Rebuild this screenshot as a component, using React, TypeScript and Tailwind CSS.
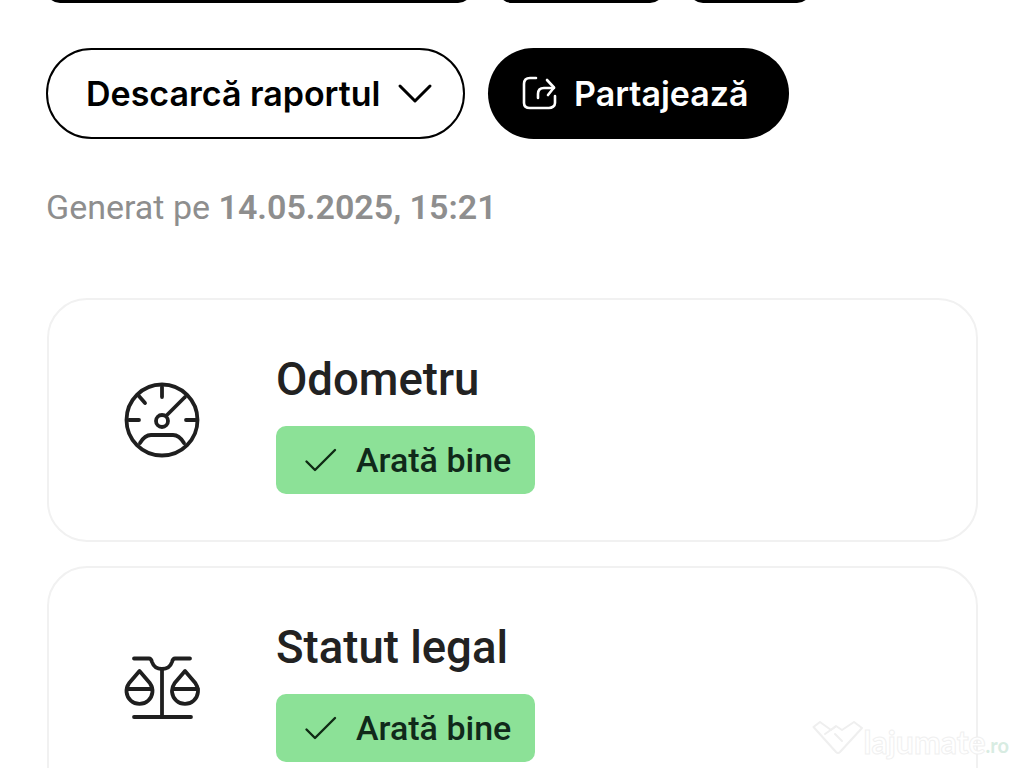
import React from "react";

const Check = () => (
  <svg width="34" height="26" viewBox="0 0 34 26" fill="none" stroke="#0f2a14" strokeWidth="2.4" strokeLinecap="round" strokeLinejoin="round" className="shrink-0">
    <path d="M2.5 14.5 L11 23 L31 3" />
  </svg>
);

const Gauge = () => (
  <svg width="76" height="76" viewBox="0 0 76 76" fill="none" stroke="#1f1f1f" strokeWidth="3.8" strokeLinecap="round" strokeLinejoin="round" className="block">
    <circle cx="38" cy="38" r="35.5" />
    <path d="M38 5 V15" />
    <path d="M14 13 L21 21" />
    <path d="M5 38 H15" />
    <path d="M62 38 H72" />
    <circle cx="38" cy="39" r="6" />
    <path d="M43 33 L61 15" />
    <path d="M16 61 C19 56 22 53 27 53 H49 C54 53 57 56 60 61" />
  </svg>
);

const Scales = () => (
  <svg width="76" height="64" viewBox="0 0 76 64" fill="none" stroke="#1f1f1f" strokeWidth="3.8" strokeLinecap="round" strokeLinejoin="round" className="block">
    <path d="M10 2.5 H25 C27 2.5 27.500 4 28 6 C29.500 10.500 33 13 38 13 C43 13 46.500 10.500 48 6 C48.500 4 49 2.500 51 2.500 H66" />
    <path d="M38 13 V61" />
    <path d="M10 61 H67" />
    <path d="M15.500 15 L5 27.300 A13 13 0 1 0 26 27.300 Z" />
    <path d="M3 33 H28" />
    <path d="M61 15 L50.500 27.300 A13 13 0 1 0 71.500 27.300 Z" />
    <path d="M49 33 H74" />
  </svg>
);

const Share = () => (
  <svg width="36" height="36" viewBox="0 0 36 36" fill="none" stroke="#ffffff" strokeWidth="2.6" strokeLinecap="round" strokeLinejoin="round" className="shrink-0">
    <path d="M14 2 H8 C4 2 2 4 2 8 V27 C2 30 4 32 8 32 H27 C30 32 33 30 33 27 V20" />
    <path d="M16 22 V18 C16 14 18 12 22 12 H32" />
    <path d="M25 4 L32 11.500 L26 19" />
  </svg>
);

const Card = ({ icon, title }: { icon: React.ReactNode; title: string }) => (
  <div className="flex h-[244px] shrink-0 items-center rounded-[40px] border-2 border-[#f1f1f1] bg-white pl-[75px]">
    <div className="flex w-[152px] shrink-0 items-center">{icon}</div>
    <div className="flex flex-col items-start pt-[8px]">
      <h2 className="text-[45.5px] leading-[52px] font-medium text-[#222222]">{title}</h2>
      <div className="mt-[20px] flex h-[68px] w-[259px] items-center gap-[18px] rounded-[10px] bg-[#8ce197] pl-[28px]">
        <Check />
        <span className="text-[34px] leading-[40px] font-medium text-[#10291a]">Arată bine</span>
      </div>
    </div>
  </div>
);

const Logo = () => (
  <div className="pointer-events-none absolute bottom-[8px] right-[15px] flex items-end">
    <svg width="52" height="34" viewBox="0 0 52 34" fill="none" stroke="#efefef" strokeWidth="2" strokeLinejoin="round" strokeLinecap="round" className="mb-[5px]">
      <path d="M1.500 6 L8 1 L19 9 L24 5 L30 9 L42 1 L50 7 L28 31 Q26 33 24 31 Z" />
      <path d="M13 13 L23 6" />
      <path d="M23 13 L30 20" />
    </svg>
    <span className="font-['Lato',sans-serif] text-[32px] leading-[36px] font-bold text-white [-webkit-text-stroke:1px_#f0f0f0]">lajumate</span>
    <span className="font-['Lato',sans-serif] text-[20px] leading-[29px] font-bold text-[#d8ece2]">.ro</span>
  </div>
);

export default function App() {
  return (
    <div className="relative flex h-[768px] w-[1024px] flex-col overflow-hidden bg-white px-[46px] font-['Roboto',sans-serif]">
      <div className="-mt-[87px] flex shrink-0">
        <div className="h-[90px] w-[426px] rounded-[14px] bg-black" />
        <div className="ml-[26px] h-[90px] w-[166px] rounded-[14px] bg-black" />
        <div className="ml-[25px] h-[90px] w-[122px] rounded-[14px] bg-black" />
      </div>
      <div className="mt-[45px] flex shrink-0 gap-[23px] font-['Inter',sans-serif]">
        <button className="flex h-[91px] w-[419px] items-center gap-[17px] rounded-full border-2 border-black bg-white pl-[38px]">
          <span className="text-[34px] leading-[40px] font-semibold text-black">Descarcă raportul</span>
          <svg width="36" height="22" viewBox="0 0 36 22" fill="none" stroke="#000000" strokeWidth="3" strokeLinecap="round" strokeLinejoin="round" className="shrink-0">
            <path d="M3 3 L18 18 L33 3" />
          </svg>
        </button>
        <button className="flex h-[91px] w-[301px] items-center gap-[16px] rounded-full bg-black pl-[34px]">
          <Share />
          <span className="text-[34px] leading-[40px] font-semibold text-white">Partajează</span>
        </button>
      </div>
      <p className="mt-[48px] shrink-0 text-[34px] leading-[40px] text-[#8e8e8e]">
        Generat pe <span className="font-semibold">14.05.2025, 15:21</span>
      </p>
      <div className="mt-[71px] flex flex-col gap-[24px] pl-px">
        <Card icon={<Gauge />} title="Odometru" />
        <Card icon={<Scales />} title="Statut legal" />
      </div>
      <Logo />
    </div>
  );
}
